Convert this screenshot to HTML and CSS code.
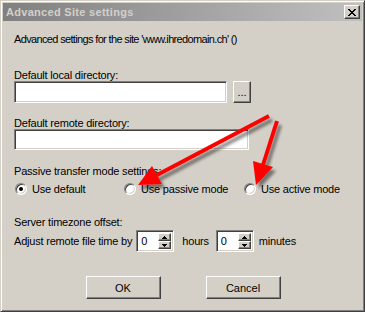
FILE: index.html
```html
<!DOCTYPE html>
<html>
<head>
  <title>Advanced Site settings</title>
  <link rel="stylesheet" href="styles.css">
</head>
<body>

  <div class="window">
    <div class="titlebar">
      <span class="title">Advanced Site settings</span>
      <button class="close">
        <svg width="8" height="7" viewBox="0 0 8 7"><path d="M0 0h2v1H0z M6 0h2v1H6z M1 1h2v1H1z M5 1h2v1H5z M2 2h4v1H2z M3 3h2v1H3z M2 4h4v1H2z M1 5h2v1H1z M5 5h2v1H5z M0 6h2v1H0z M6 6h2v1H6z" fill="#000"/></svg>
      </button>
    </div>

    <div class="content">
      <p class="intro">Advanced settings for the site 'www.ihredomain.ch' ()</p>

      <div class="label label-local">Default local directory:</div>
      <div class="row">
        <input type="text" class="edit edit-local">
        <button class="btn browse">...</button>
      </div>

      <div class="label label-remote">Default remote directory:</div>
      <input type="text" class="edit edit-remote">

      <div class="label label-passive">Passive transfer mode settings:</div>
      <div class="radios">
        <div class="option"><span class="radio checked"></span>Use default</div>
        <div class="option"><span class="radio"></span>Use passive mode</div>
        <div class="option"><span class="radio"></span>Use active mode</div>
      </div>

      <div class="label label-tz">Server timezone offset:</div>
      <div class="spinrow">
        <span class="spin-text">Adjust remote file time by</span>
        <div class="spin">
          <input type="text" class="spin-value" value="0">
          <div class="spin-buttons">
            <span class="spin-btn"><svg width="5" height="3" viewBox="0 0 5 3"><path d="M2 0h1v1h1v1h1v1H0V2h1V1h1z" fill="#000"/></svg></span>
            <span class="spin-btn"><svg width="5" height="3" viewBox="0 0 5 3"><path d="M0 0h5v1H4v1H3v1H2V2H1V1H0z" fill="#000"/></svg></span>
          </div>
        </div>
        <span class="unit-hours">hours</span>
        <div class="spin">
          <input type="text" class="spin-value" value="0">
          <div class="spin-buttons">
            <span class="spin-btn"><svg width="5" height="3" viewBox="0 0 5 3"><path d="M2 0h1v1h1v1h1v1H0V2h1V1h1z" fill="#000"/></svg></span>
            <span class="spin-btn"><svg width="5" height="3" viewBox="0 0 5 3"><path d="M0 0h5v1H4v1H3v1H2V2H1V1H0z" fill="#000"/></svg></span>
          </div>
        </div>
        <span class="unit-minutes">minutes</span>
      </div>

      <div class="buttons">
        <button class="btn action">OK</button>
        <button class="btn action">Cancel</button>
      </div>
    </div>

    <!-- red annotation arrows drawn over the dialog -->
    <svg class="arrows" width="365" height="312" viewBox="0 0 365 312">
      <defs>
        <filter id="shadow" x="-20%" y="-20%" width="140%" height="140%">
          <feDropShadow dx="3" dy="4" stdDeviation="1.8" flood-color="#000" flood-opacity="0.45"/>
        </filter>
      </defs>
      <g filter="url(#shadow)">
        <line x1="268" y1="115" x2="156" y2="174" stroke="#ff0000" stroke-width="4"/>
        <polygon points="137,184 151,165 161,183" fill="#ff0000"/>
        <line x1="276" y1="120" x2="262" y2="164" stroke="#ff0000" stroke-width="4"/>
        <polygon points="255,184 252,160 272,166" fill="#ff0000"/>
      </g>
    </svg>
  </div>

</body>
</html>
```

FILE: styles.css
```css
* {
  box-sizing: border-box;
}
body {
  margin: 0;
  font-family: "Liberation Sans", Arial, sans-serif;
  font-size: 11px;
  color: #000;
  background-color: #d4d0c8;
}
.window {
  position: relative;
  width: 365px;
  height: 312px;
  padding: 2px;
  background-color: #d4d0c8;
  border: 1px solid;
  border-color: #d4d0c8 #404040 #404040 #d4d0c8;
  box-shadow: inset 1px 1px #fff, inset -1px -1px #808080;
  display: flex;
  flex-direction: column;
}
.titlebar {
  height: 18px;
  display: flex;
  align-items: center;
  justify-content: space-between;
  padding: 0 2px 0 3px;
  background: linear-gradient(to right, #808080, #c0c0c0);
}
.title {
  color: #d4d0c8;
  font-weight: bold;
  letter-spacing: 0.3px;
  line-height: 18px;
}
.close {
  width: 16px;
  height: 14px;
  padding: 0;
  display: flex;
  align-items: center;
  justify-content: center;
  background-color: #d4d0c8;
  border: 1px solid;
  border-color: #fff #404040 #404040 #fff;
  box-shadow: inset -1px -1px #808080;
}
.content {
  padding: 12px 0 0 11px;
  letter-spacing: -0.2px;
}
.intro {
  margin: 0;
  line-height: 13px;
  letter-spacing: -0.65px;
}
.label {
  line-height: 12px;
}
.label-local {
  margin-top: 23px;
}
.label-remote {
  margin-top: 14px;
}
.label-passive {
  margin-top: 15px;
}
.label-tz {
  margin-top: 19px;
}
.row {
  display: flex;
  gap: 6px;
}
.edit {
  display: block;
  margin: 0;
  padding: 0 3px;
  height: 22px;
  font: inherit;
  background-color: #fff;
  border: 1px solid;
  border-color: #808080 #fff #fff #808080;
  box-shadow: inset 1px 1px #404040, inset -1px -1px #d4d0c8;
  outline: none;
}
.edit-local {
  width: 213px;
}
.edit-remote {
  width: 235px;
  height: 21px;
}
.btn {
  margin: 0;
  padding: 0;
  font: inherit;
  color: #000;
  background-color: #d4d0c8;
  border: 1px solid;
  border-color: #fff #404040 #404040 #fff;
  box-shadow: inset -1px -1px #808080;
}
.browse {
  width: 18px;
  height: 22px;
  letter-spacing: 0;
}
.radios {
  margin-top: 4px;
  height: 16px;
  display: grid;
  grid-template-columns: 109px 120px auto;
  padding-left: 1px;
}
.option {
  display: flex;
  align-items: center;
  gap: 5px;
  line-height: 13px;
}
.radio {
  position: relative;
  width: 12px;
  height: 12px;
  flex: none;
  border-radius: 50%;
  background-color: #fff;
  border: 1px solid;
  border-color: #808080 #fff #fff #808080;
  box-shadow: inset 1px 1px #404040, inset -1px -1px #d4d0c8;
}
.radio.checked::after {
  content: "";
  position: absolute;
  left: 3px;
  top: 3px;
  width: 4px;
  height: 4px;
  border-radius: 50%;
  background-color: #000;
}
.spinrow {
  margin-top: 2px;
  height: 22px;
  display: flex;
  align-items: center;
  line-height: 13px;
}
.spin {
  width: 38px;
  height: 22px;
  display: flex;
  background-color: #fff;
  border: 1px solid;
  border-color: #808080 #fff #fff #808080;
  box-shadow: inset 1px 1px #404040, inset -1px -1px #d4d0c8;
  padding: 2px;
}
.spin-value {
  width: 19px;
  margin: 0;
  padding: 0 0 0 2px;
  border: none;
  font: inherit;
  background: transparent;
  outline: none;
}
.spin-buttons {
  width: 15px;
  display: flex;
  flex-direction: column;
}
.spin-btn {
  flex: 1;
  display: flex;
  align-items: center;
  justify-content: center;
  background-color: #d4d0c8;
  border: 1px solid;
  border-color: #fff #404040 #404040 #fff;
  box-shadow: inset -1px -1px #808080;
}
.spin-text {
  margin-right: 4px;
}
.unit-hours {
  margin: 0 7px 0 8px;
}
.unit-minutes {
  margin-left: 5px;
}
.buttons {
  margin-top: 24px;
  display: flex;
  justify-content: center;
  gap: 45px;
  padding-right: 10px;
}
.action {
  width: 75px;
  height: 23px;
  letter-spacing: 0;
}
.arrows {
  position: absolute;
  left: 0;
  top: 0;
  pointer-events: none;
}
```
